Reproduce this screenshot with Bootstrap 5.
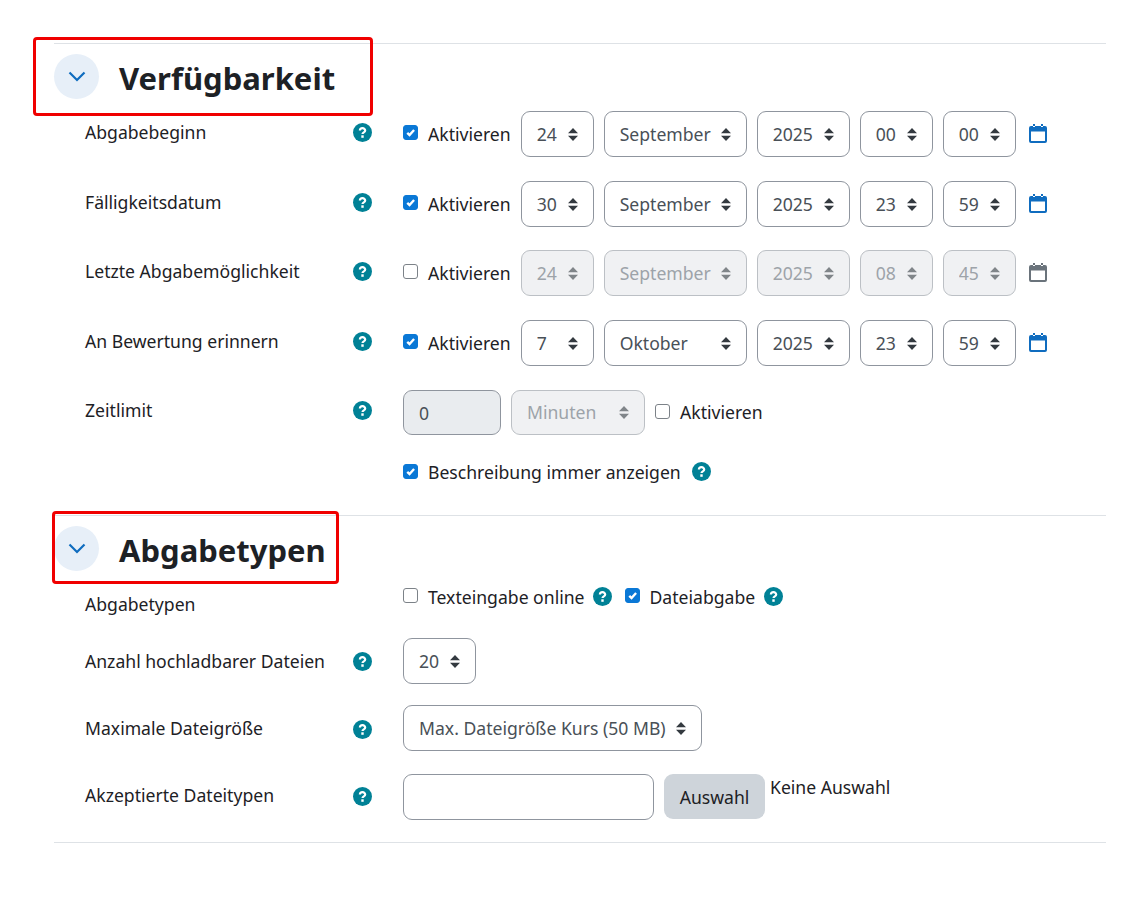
<!DOCTYPE html>
<html lang="de">

<head>
    <meta charset="UTF-8">
    <meta name="viewport" content="width=device-width, initial-scale=1.0">
    <title>Aufgabe bearbeiten</title>
    <link href="https://cdn.jsdelivr.net/npm/bootstrap@5.3.3/dist/css/bootstrap.min.css" rel="stylesheet">
    <script src="https://cdn.jsdelivr.net/npm/bootstrap@5.3.3/dist/js/bootstrap.bundle.min.js"></script>
    <style>
        body {
            font-family: "Noto Sans", "Liberation Sans", sans-serif;
            font-size: 17.6px;
            color: #1d2125;
            background: #fff;
        }

        .form-wrap {
            padding: 43px 17px 0 54px;
        }

        .sect {
            border-top: 1px solid #dee2e6;
            padding-top: 10px;
            height: 472px;
        }

        .sect-two {
            height: 328px;
            border-bottom: 1px solid #dee2e6;
        }

        .sect-head {
            position: relative;
            height: 45px;
            gap: 20px;
            margin-bottom: 12px;
        }

        .toggle-circle {
            width: 45px;
            height: 45px;
            border-radius: 50%;
            background: #e7eff8;
        }

        .sect-title {
            font-size: 31px;
            font-weight: 700;
            margin: 0;
            padding-top: 4px;
            color: #1d2125;
        }

        .red-box {
            position: absolute;
            border: 3px solid #f00000;
            border-radius: 4px;
            pointer-events: none;
        }

        .red-one {
            left: -21px;
            top: -17px;
            width: 340px;
            height: 79px;
        }

        .red-two {
            left: -2px;
            top: -15px;
            width: 287px;
            height: 73px;
        }

        .field-row {
            height: 46px;
            margin-bottom: 24px;
            padding-left: 31px;
        }

        #date-rows .field-row:nth-child(2) {
            margin-bottom: 23px;
        }

        .field-row.after-types {
            margin-bottom: 9px;
        }

        .field-row.after-count {
            margin-bottom: 21px;
        }

        .field-row.after-size {
            margin-bottom: 23px;
        }

        .field-label {
            width: 318px;
            flex: none;
            padding-top: 7px;
            line-height: 28px;
            display: flex;
        }

        .field-label span {
            width: 268px;
        }

        .label-up {
            padding-top: 6px;
        }

        .label-mid {
            padding-top: 8px;
        }

        .label-low {
            padding-top: 9px;
        }

        .label-lower {
            padding-top: 10px;
        }

        .label-mid span,
        .label-lower span {
            margin-top: -1px;
        }

        .help-dot {
            width: 19px;
            height: 19px;
            flex: none;
            display: inline-block;
        }

        .field-label .help-dot {
            margin-top: 5px;
        }

        .gap-10 {
            gap: 10px;
        }

        .gap-13 {
            gap: 13px;
        }

        .line-28 {
            height: 28px;
        }

        .form-select.pick,
        .form-control.pick {
            height: 46px;
            font-size: 17.6px;
            color: #495057;
            border-color: #8f959e;
            border-radius: 9px;
            padding: 0 15px;
            flex: none;
        }

        .form-select.pick.h-45,
        .form-control.pick.h-45 {
            height: 45px;
        }

        .form-select.pick {
            background-image: url("data:image/svg+xml,%3Csvg xmlns='http://www.w3.org/2000/svg' viewBox='0 0 10 13'%3E%3Cpath fill='%23343a40' d='M5 0l5 5.200H0zM5 13L0 7.800h10z'/%3E%3C/svg%3E");
            background-size: 10px 13px;
            background-position: right 15px center;
        }

        .form-select.pick:disabled {
            background-color: #f0f1f3;
            color: #9da3a9;
            border-color: #bcc0c5;
            background-image: url("data:image/svg+xml,%3Csvg xmlns='http://www.w3.org/2000/svg' viewBox='0 0 10 13'%3E%3Cpath fill='%23808589' d='M5 0l5 5.200H0zM5 13L0 7.800h10z'/%3E%3C/svg%3E");
        }

        .form-control.pick:disabled {
            background-color: #e9ecef;
        }

        .w-73 { width: 73px; }
        .w-93 { width: 93px; }
        .w-143 { width: 143px; }
        .w-134 { width: 134px; }
        .w-98 { width: 98px; }
        .w-299 { width: 299px; }
        .w-251 { width: 251px; }

        .check-line {
            gap: 10px;
            white-space: nowrap;
        }

        .desc-line {
            padding-left: 349px;
            margin-top: -1px;
        }

        .desc-line .help-dot {
            margin-left: 1px;
            margin-bottom: 2px;
        }

        .help-near {
            margin-left: -2px;
        }

        .help-nearer {
            margin-left: -1px;
        }

        .form-check-input.tick {
            width: 15px;
            height: 15px;
            margin: 0 0 2px 0;
            border-color: #7c8288;
            border-radius: 3px;
            flex: none;
        }

        .form-check-input.tick:checked {
            background-color: #0a78d6;
            border-color: #0a78d6;
            background-image: url("data:image/svg+xml,%3Csvg xmlns='http://www.w3.org/2000/svg' viewBox='0 0 20 20'%3E%3Cpath fill='none' stroke='%23fff' stroke-width='3.600' d='M5 10.500l3.500 3.500 7-8'/%3E%3C/svg%3E");
        }

        .check-line label {
            margin: 0;
            color: #1d2125;
        }

        .cal-icon {
            width: 18px;
            height: 19px;
            margin-left: 3px;
            margin-bottom: 2px;
            flex: none;
            color: #0f6cbf;
        }

        .cal-off {
            color: #6a737b;
        }

        .btn.pick-btn {
            height: 45px;
            width: 101px;
            margin-left: 10px;
            padding: 2px 0 0;
            font-size: 17.6px;
            color: #1d2125;
            background: #ced4da;
            border: 0;
            border-radius: 9px;
        }

        .none-note {
            margin-left: 5px;
            margin-top: -1px;
            align-self: flex-start;
            line-height: 28px;
        }
    </style>
</head>

<body>
    <svg class="d-none">
        <symbol id="help" viewBox="0 0 19 19">
            <circle cx="9.500" cy="9.500" r="9.500" fill="#008196" />
            <path fill="none" stroke="#fff" stroke-width="2.200" d="M6.900 7.600c0-3.200 5.300-3.200 5.300-.1 0 2-2.700 1.800-2.700 3.600" />
            <rect x="8.300" y="12.300" width="2.400" height="2.500" fill="#fff" />
        </symbol>
        <symbol id="cal" viewBox="0 0 18 19">
            <path fill="currentColor" fill-rule="evenodd" d="M4 0h2v3H4zM12 0h2v3h-2zM2 2h14a2 2 0 0 1 2 2v13a2 2 0 0 1-2 2H2a2 2 0 0 1-2-2V4a2 2 0 0 1 2-2zm0 5.500V16.500a.5.5 0 0 0 .5.500h13a.5.5 0 0 0 .5-.5V7.500z" />
        </symbol>
    </svg>

    <div class="form-wrap">
        <!-- Verfuegbarkeit -->
        <section class="sect">
            <div class="sect-head d-flex align-items-center">
                <span class="toggle-circle d-flex align-items-center justify-content-center">
                    <svg width="18" height="11" viewBox="0 0 18 11"><path fill="none" stroke="#0f6cbf" stroke-width="2.200" d="M1.500 1.500L9 9l7.500-7.500" /></svg>
                </span>
                <h3 class="sect-title">Verfügbarkeit</h3>
                <div class="red-box red-one"></div>
            </div>

            <div id="date-rows"></div>

            <div class="field-row d-flex align-items-start">
                <div class="field-label label-up"><span>Zeitlimit</span><svg class="help-dot"><use href="#help" /></svg></div>
                <div class="d-flex align-items-center gap-10">
                    <input class="form-control pick h-45 w-98" type="text" value="0" disabled>
                    <select class="form-select pick h-45 w-134" disabled><option>Minuten</option></select>
                    <div class="d-flex align-items-center check-line">
                        <input class="form-check-input tick" type="checkbox" id="limit-on">
                        <label for="limit-on">Aktivieren</label>
                    </div>
                </div>
            </div>

            <div class="d-flex align-items-center check-line desc-line">
                <input class="form-check-input tick" type="checkbox" id="always-show" checked>
                <label for="always-show">Beschreibung immer anzeigen</label>
                <svg class="help-dot"><use href="#help" /></svg>
            </div>
        </section>

        <!-- Abgabetypen -->
        <section class="sect sect-two">
            <div class="sect-head d-flex align-items-center">
                <span class="toggle-circle d-flex align-items-center justify-content-center">
                    <svg width="18" height="11" viewBox="0 0 18 11"><path fill="none" stroke="#0f6cbf" stroke-width="2.200" d="M1.500 1.500L9 9l7.500-7.500" /></svg>
                </span>
                <h3 class="sect-title">Abgabetypen</h3>
                <div class="red-box red-two"></div>
            </div>

            <div class="field-row after-types d-flex align-items-start">
                <div class="field-label"><span>Abgabetypen</span></div>
                <div class="d-flex align-items-center gap-13 line-28">
                    <div class="d-flex align-items-center check-line">
                        <input class="form-check-input tick" type="checkbox" id="type-text">
                        <label for="type-text">Texteingabe online</label>
                        <svg class="help-dot help-near"><use href="#help" /></svg>
                    </div>
                    <div class="d-flex align-items-center check-line">
                        <input class="form-check-input tick" type="checkbox" id="type-file" checked>
                        <label for="type-file">Dateiabgabe</label>
                        <svg class="help-dot help-nearer"><use href="#help" /></svg>
                    </div>
                </div>
            </div>

            <div class="field-row after-count d-flex align-items-start">
                <div class="field-label label-low"><span>Anzahl hochladbarer Dateien</span><svg class="help-dot"><use href="#help" /></svg></div>
                <select class="form-select pick w-73"><option>20</option></select>
            </div>

            <div class="field-row after-size d-flex align-items-start">
                <div class="field-label label-lower"><span>Maximale Dateigröße</span><svg class="help-dot"><use href="#help" /></svg></div>
                <select class="form-select pick w-299"><option>Max. Dateigröße Kurs (50 MB)</option></select>
            </div>

            <div class="field-row d-flex align-items-start">
                <div class="field-label label-mid"><span>Akzeptierte Dateitypen</span><svg class="help-dot"><use href="#help" /></svg></div>
                <input class="form-control pick w-251" type="text">
                <button class="btn pick-btn" type="button">Auswahl</button>
                <span class="none-note">Keine Auswahl</span>
            </div>
        </section>
    </div>

    <script>
        // Datumszeilen
        const dateRows = [
            { label: 'Abgabebeginn', on: true, day: '24', month: 'September', year: '2025', hour: '00', minute: '00' },
            { label: 'Fälligkeitsdatum', on: true, day: '30', month: 'September', year: '2025', hour: '23', minute: '59' },
            { label: 'Letzte Abgabemöglichkeit', on: false, day: '24', month: 'September', year: '2025', hour: '08', minute: '45' },
            { label: 'An Bewertung erinnern', on: true, day: '7', month: 'Oktober', year: '2025', hour: '23', minute: '59' }
        ];

        const container = document.getElementById('date-rows');

        dateRows.forEach((row, i) => {
            const dis = row.on ? '' : 'disabled';
            container.innerHTML += `
                <div class="field-row d-flex align-items-start">
                    <div class="field-label"><span>${row.label}</span><svg class="help-dot"><use href="#help" /></svg></div>
                    <div class="d-flex align-items-center gap-10">
                        <div class="d-flex align-items-center check-line">
                            <input class="form-check-input tick" type="checkbox" id="on-${i}" ${row.on ? 'checked' : ''}>
                            <label for="on-${i}">Aktivieren</label>
                        </div>
                        <select class="form-select pick w-73" ${dis}><option>${row.day}</option></select>
                        <select class="form-select pick w-143" ${dis}><option>${row.month}</option></select>
                        <select class="form-select pick w-93" ${dis}><option>${row.year}</option></select>
                        <select class="form-select pick w-73" ${dis}><option>${row.hour}</option></select>
                        <select class="form-select pick w-73" ${dis}><option>${row.minute}</option></select>
                        <svg class="cal-icon ${row.on ? '' : 'cal-off'}"><use href="#cal" /></svg>
                    </div>
                </div>`;
        });
    </script>
</body>

</html>
